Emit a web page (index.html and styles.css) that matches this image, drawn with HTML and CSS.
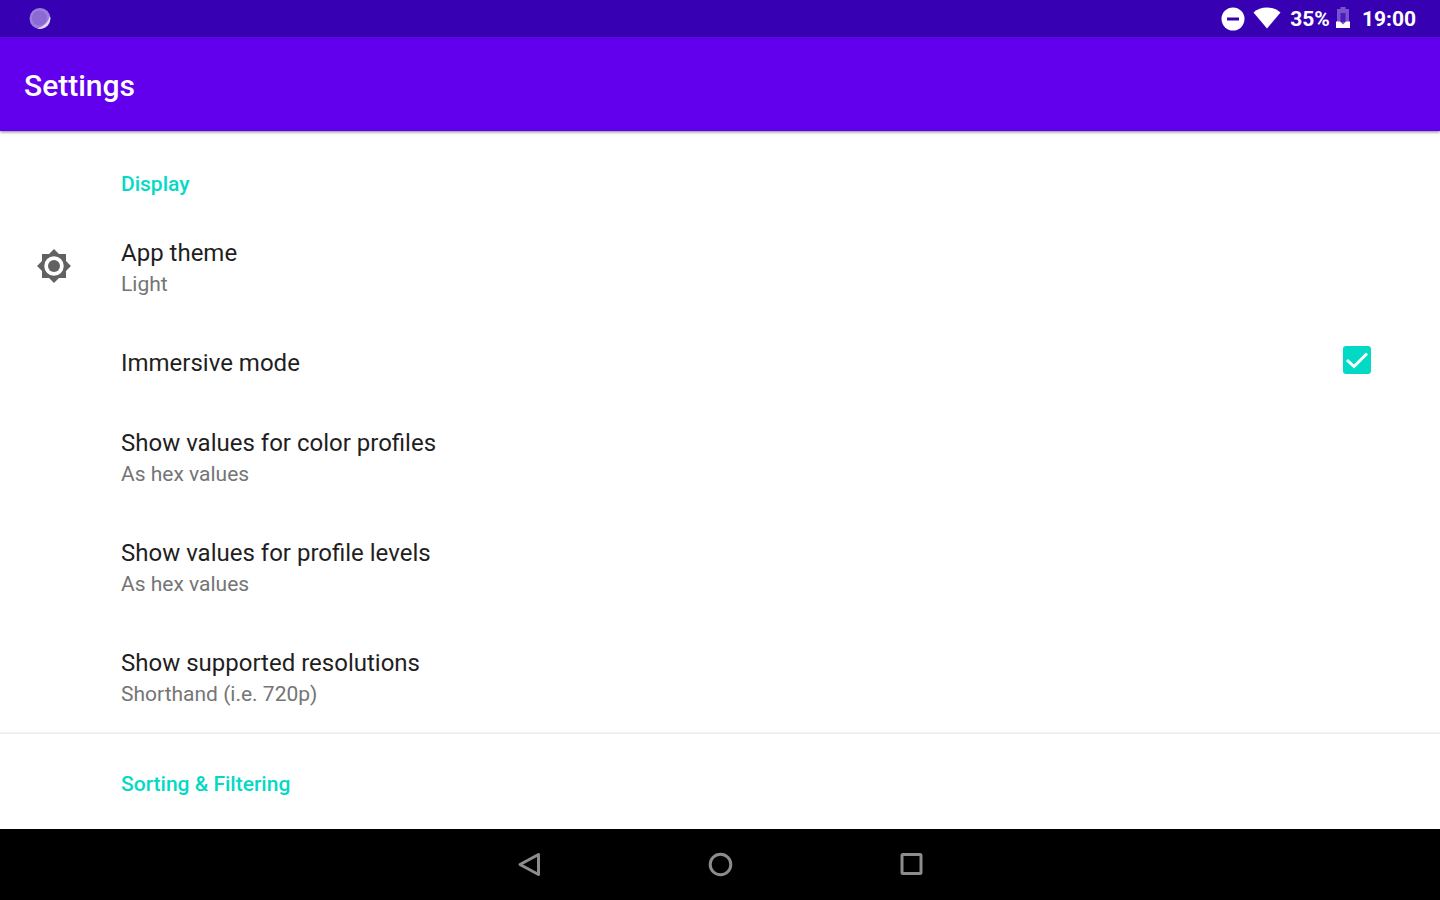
FILE: index.html
```html
<!DOCTYPE html>
<html lang="en">
<head>
<meta charset="utf-8">
<title>Settings</title>
<link rel="stylesheet" href="styles.css">
</head>
<body>
<div class="screen">
  <div class="status">
    <svg class="status-app" width="24" height="24" viewBox="0 0 24 24" aria-hidden="true">
      <circle cx="12" cy="11.500" r="10.500" fill="#9a7fdb"/>
      <path d="M22 9A10.500 10.500 0 0 1 9 21.500Q19 19 22 9z" fill="#e2d9f6"/>
      <circle cx="11.500" cy="11" r="7.500" fill="#8b6bd3"/>
    </svg>
    <div class="status-info">
      <svg width="24" height="24" viewBox="0 0 24 24" aria-hidden="true">
        <circle cx="12" cy="12" r="11.500" fill="#fff"/>
        <rect x="6" y="10.500" width="12" height="3" fill="#3700b3"/>
      </svg>
      <svg class="wifi" width="28" height="24" viewBox="0 0 28 24" aria-hidden="true">
        <path d="M14 21.500.5 5.500Q6 .5 14 .5t13.500 5z" fill="#fff"/>
      </svg>
      <span class="percent">35%</span>
      <svg class="battery" width="14" height="24" viewBox="0 0 14 24" aria-hidden="true">
        <path d="M4.500 0h5v2H13v19H1V2h3.500z" fill="#7a52cc"/>
        <path d="M4.500 6h5v9h-5z" fill="#4a1cba"/>
        <path d="M0 14.500h4l3 3 3-3h4V21H0z" fill="#fff"/>
      </svg>
      <time class="clock">19:00</time>
    </div>
  </div>
  <header class="appbar"><h1 class="appbar-title">Settings</h1></header>
  <main class="content">
    <section class="group">
      <h2 class="category">Display</h2>
      <button class="row" type="button">
        <span class="row-icon">
          <svg width="36" height="36" viewBox="0 0 24 24" aria-hidden="true">
            <path fill="#616161" d="M20 15.310 23.310 12 20 8.690V4h-4.690L12 .69 8.690 4H4v4.690L.69 12 4 15.310V20h4.690L12 23.310 15.310 20H20zM12 18.500a6.500 6.500 0 1 1 0-13 6.500 6.500 0 0 1 0 13z"/>
            <circle cx="12" cy="12" r="4" fill="#616161"/>
          </svg>
        </span>
        <span class="row-text"><span class="title">App theme</span><span class="summary">Light</span></span>
      </button>
      <label class="row row-single">
        <span class="row-text"><span class="title">Immersive mode</span></span>
        <span class="check">
          <input class="check-input" type="checkbox" checked>
          <svg class="check-mark" viewBox="0 0 28 28" aria-hidden="true"><path d="M4 14l7 6.500L24 7.500" fill="none" stroke="#fff" stroke-width="3"/></svg>
        </span>
      </label>
      <button class="row" type="button">
        <span class="row-text"><span class="title">Show values for color profiles</span><span class="summary">As hex values</span></span>
      </button>
      <button class="row" type="button">
        <span class="row-text"><span class="title">Show values for profile levels</span><span class="summary">As hex values</span></span>
      </button>
      <button class="row" type="button">
        <span class="row-text"><span class="title">Show supported resolutions</span><span class="summary">Shorthand (i.e. 720p)</span></span>
      </button>
    </section>
    <section class="group">
      <h2 class="category">Sorting &amp; Filtering</h2>
    </section>
  </main>
  <nav class="navbar">
    <button class="nav-button" type="button" aria-label="Back">
      <svg width="26" height="26" viewBox="0 0 26 26" aria-hidden="true"><path d="M22.500 3.500v20L4 13.500z"/></svg>
    </button>
    <button class="nav-button" type="button" aria-label="Home">
      <svg width="26" height="26" viewBox="0 0 26 26" aria-hidden="true"><circle cx="13.500" cy="13.500" r="10.300"/></svg>
    </button>
    <button class="nav-button" type="button" aria-label="Recent apps">
      <svg width="26" height="26" viewBox="0 0 26 26" aria-hidden="true"><rect x="4" y="3.500" width="19" height="19" rx="1"/></svg>
    </button>
  </nav>
</div>
</body>
</html>
```
FILE: styles.css
```css
* {
  box-sizing: border-box;
}

body {
  margin: 0;
  background: #fff;
  font-family: Roboto, "Liberation Sans", sans-serif;
}

h1,
h2 {
  margin: 0;
}

.screen {
  display: flex;
  flex-direction: column;
  height: 100vh;
}

.status {
  display: flex;
  flex: none;
  align-items: center;
  justify-content: space-between;
  padding: 7px 24px 6px 28px;
  background: #3700b3;
  color: #fff;
}

.status-info {
  display: flex;
  align-items: center;
  font-size: 21px;
  font-weight: 700;
  line-height: 24px;
}

.wifi {
  margin-left: 8px;
}

.percent {
  margin-left: 9px;
}

.battery {
  margin-left: 6px;
}

.clock {
  margin-left: 12px;
}

.appbar {
  position: relative;
  flex: none;
  padding: 34px 24px 30px;
  background: #6200ee;
  box-shadow: 0 1px 3px rgba(0, 0, 0, 0.5);
  color: #fff;
}

.appbar-title {
  font-size: 30px;
  font-weight: 500;
  line-height: 30px;
}

.content {
  flex: 1;
  min-height: 0;
  padding-top: 3px;
  overflow: hidden;
}

.group + .group {
  border-top: 1px solid #ededed;
  box-shadow: 0 -1px 1px #f3f3f3;
}

.category {
  padding: 38px 24px 17px 121px;
  color: #03dac5;
  font-size: 21px;
  font-weight: 500;
  line-height: 24px;
}

.row {
  display: flex;
  align-items: center;
  width: 100%;
  min-height: 110px;
  padding: 0 69px 0 121px;
  border: 0;
  background: none;
  color: #1f1f1f;
  font: inherit;
  text-align: left;
}

.row:has(.row-icon) {
  padding-left: 36px;
}

.row-single {
  min-height: 80px;
}

.row-icon {
  display: flex;
  flex: none;
  width: 85px;
  padding-bottom: 4px;
}

.row-text {
  display: flex;
  flex: 1;
  flex-direction: column;
}

.title {
  font-size: 24px;
  line-height: 32px;
}

.summary {
  color: #757575;
  font-size: 21px;
  line-height: 30px;
}

.check {
  display: grid;
  padding-bottom: 6px;
}

.check-input,
.check-mark {
  grid-area: 1 / 1;
  width: 28px;
  height: 28px;
  margin: 0;
}

.check-input {
  appearance: none;
  border: 2px solid #757575;
  border-radius: 3px;
}

.check-input:checked {
  border-color: #03dac5;
  background: #03dac5;
}

.check-mark {
  visibility: hidden;
  pointer-events: none;
}

.check-input:checked + .check-mark {
  visibility: visible;
}

.navbar {
  display: flex;
  flex: none;
  gap: 143px;
  align-items: center;
  justify-content: center;
  padding: 11px 0 12px;
  background: #000;
}

.nav-button {
  display: flex;
  padding: 11px;
  border: 0;
  background: none;
}

.nav-button svg {
  fill: none;
  stroke: #8c8c8c;
  stroke-linejoin: round;
  stroke-width: 3;
}
```
